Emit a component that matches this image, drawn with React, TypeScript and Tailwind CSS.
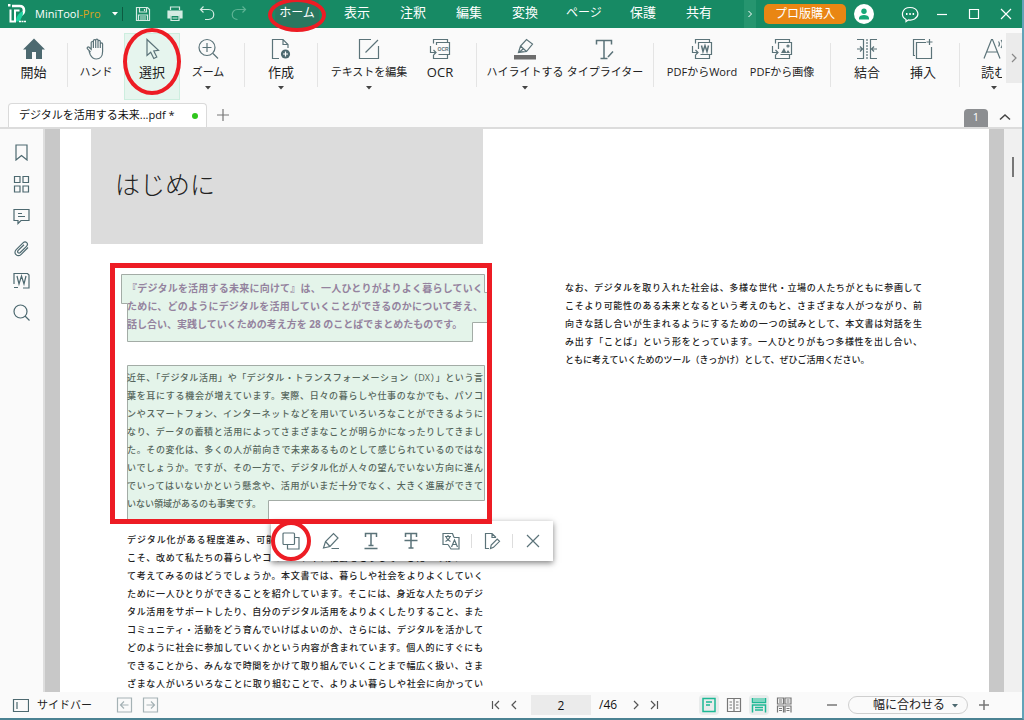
import { Fragment, type ReactNode } from "react";
import { clsx } from "clsx";

interface IconProps {
  size?: number;
  width?: number;
  className?: string;
  children: ReactNode;
}

function Icon({ size = 22, width = 1.2, className, children }: IconProps) {
  return (
    <svg
      width={size}
      height={size}
      viewBox={`0 0 ${size} ${size}`}
      fill="none"
      stroke="currentColor"
      strokeWidth={width}
      className={clsx("shrink-0", className)}
      aria-hidden="true"
    >
      {children}
    </svg>
  );
}

const icons = {
  home: (
    <Icon>
      <path d="M11 .5 0 11.5h3V21h6v-7h4v7h6v-9.500h3z" fill="#4d6970" stroke="none" />
    </Icon>
  ),
  hand: (
    <Icon>
      <path d="M5.500 14 2.500 10.800c-1-1.100.6-2.400 1.600-1.500l2.100 2V4.600c0-1.500 2.200-1.500 2.200 0V10M8.400 9V2.700c0-1.500 2.300-1.500 2.300 0V10M10.700 9V2.200c0-1.500 2.300-1.500 2.300 0V10M13 9V3.400c0-1.500 2.300-1.500 2.300 0V10M15.300 10V6c0-1.500 2.300-1.500 2.300 0v7.500c0 4.500-2.300 7.500-6.300 7.500-3 0-4.600-1.600-6-4.300L4 13" />
    </Icon>
  ),
  cursor: (
    <Icon>
      <path d="M6 1.500v16l3.700-3.300 3.100 6.300 3-1.500-3-6.100 4.700-.6z" />
    </Icon>
  ),
  zoom: (
    <Icon>
      <circle cx="10" cy="9.500" r="8" />
      <path d="M16 15.500l5 5M10 5v9M5.500 9.500h9" />
    </Icon>
  ),
  create: (
    <Icon>
      <path d="M9 20.500H2.500v-19H13l5 5V10M13 1.500v5h5" />
      <circle cx="15.500" cy="16" r="4.600" fill="#4d6970" stroke="none" />
      <path d="M15.500 13.500v5M13 16h5" stroke="#fff" />
    </Icon>
  ),
  edit: (
    <Icon>
      <path d="M13 1.500H1.500v19h19V8M7.500 14.500l12.500-12.500" />
    </Icon>
  ),
  ocr: (
    <Icon>
      <path d="M4.500 5.500v-4h14v3M4.500 17v3.500h14V17M1.500 8v6.500h5M4.500 12l2.500 2.500L4.500 17M7.500 7V4.500h13v12h-11" />
      <text x="8.500" y="12.500" fontSize="5" fontWeight="700" fontFamily="Liberation Sans" fill="#5b7379" stroke="none">
        OCR
      </text>
    </Icon>
  ),
  highlight: (
    <Icon>
      <path d="M4.500 14.500 6.500 8l6-6.500L18.500 6l-6 7.500zM6.500 8l6 5.500M4.500 14.500l5-1M9 11l-4 3.500" />
      <path d="M0 17h22v4.500H0z" fill="#6d6d6d" stroke="none" />
    </Icon>
  ),
  typewriter: (
    <Icon width={1.5}>
      <path d="M2.500 6.500v-4h15v4M10 2.500v18M6.500 20.500h7M14 19l5-5.500" />
    </Icon>
  ),
  toWord: (
    <Icon>
      <path d="M4.500 5.500v-4h14v3M4.500 17v3.500h14V17M1.500 8v6.500h5M4.500 12l2.500 2.500L4.500 17M7.500 11V4.500h13v12h-11" />
      <path d="M10.500 7.500l1.500 6 2-6 2 6 1.500-6" strokeWidth="1.500" />
    </Icon>
  ),
  toImage: (
    <Icon>
      <path d="M4.500 5.500v-4h14v3M4.500 17v3.500h14V17M1.500 8v6.500h5M4.500 12l2.500 2.500L4.500 17M7.500 11V4.500h13v12h-11" />
      <path d="M10 15l3-5 2.500 5zM15 15l2-3 2 3z" fill="#5b7379" stroke="none" />
      <circle cx="17" cy="8" r="1" />
    </Icon>
  ),
  merge: (
    <Icon>
      <path d="M1 1.500h6.500v19H1M21 1.500h-6.500v19H21M1 11h5M4 8.500 6.500 11 4 13.500M21 11h-5M18 8.500 15.500 11l2.500 2.500" />
      <path d="M11 1v20" strokeDasharray="2 1" />
    </Icon>
  ),
  insert: (
    <Icon>
      <path d="M13 1.500H1.500v16H3M14 4.500H4.500v16h15V9M17.500 1v6M14.500 4h6" />
    </Icon>
  ),
  read: (
    <Icon>
      <path d="M1 20.500 8.500 1.500h1l7.500 19M4 14h10M15.500 3.500c1.200 1.600 1.200 3.400 0 5M18 2c2 2.600 2 5.400 0 8" />
    </Icon>
  ),
};

function Caret({ className }: { className?: string }) {
  return (
    <svg width="6" height="4" viewBox="0 0 6 4" className={className} aria-hidden="true">
      <path d="M0 0h6L3 3.500z" fill="currentColor" />
    </svg>
  );
}

/* hand-drawn style marker rings */
function Ring({ className }: { className: string }) {
  return (
    <span
      className={clsx("pointer-events-none absolute z-20 rounded-[50%] border-4 border-[#ed1c24]", className)}
    />
  );
}

const menus = ["表示", "注釈", "編集", "変換", "ページ", "保護", "共有"];

function TitleBar() {
  return (
    <header className="flex h-7 shrink-0 items-center bg-[#178a64] text-[13px] text-white">
      <button className="flex h-7 w-[122px] items-center pl-2">
        <svg width="19" height="20" viewBox="0 0 19 20" fill="none" aria-hidden="true">
          <path d="M4 2h7.500c3 0 4.500 1.800 4.500 4.500 0 2-1 3.500-3 4.500" stroke="#fff" strokeWidth="2.600" />
          <path d="M2.500 5.500v12H7v-11h4.500" stroke="#fff" strokeWidth="2" />
          <path d="M8 17.500c0-5 2.500-8 6-10l1 1c0 4-2 5-3 9z" fill="#1fd3a0" />
          <path d="M0 0h2.500v2.500H0z" fill="#fff" />
          <path d="M11 17.500h7" stroke="#fff" strokeWidth="1.500" strokeDasharray="2 .5" />
        </svg>
        <span className="ml-2 font-['Open_Sans'] text-[11px]">
          MiniTool<span className="text-[#d9a520]">-Pro</span>
        </span>
        <Caret className="ml-auto mr-1" />
      </button>
      <span className="h-3.5 w-px bg-[#0c5c41]" />
      <div className="ml-1 mr-2.5 flex text-[#d5ebe3]">
        <button className="flex w-8 justify-center" aria-label="保存">
          <Icon size={16}>
            <path d="M1.500 1.500h11l2 2v11h-13zM4.500 1.500v4.500h7V1.500M3.500 14.500V9h9v5.500M5 11h6M5 13h6M9.500 3v2" />
          </Icon>
        </button>
        <button className="flex w-8 justify-center" aria-label="印刷">
          <Icon size={16}>
            <path d="M3.500 4V1h9v3" />
            <path d="M1 5h14v7h-2V9H3v3H1z" fill="currentColor" />
            <path d="M4 9.500h8v5H4zM5.500 12h5" />
          </Icon>
        </button>
        <button className="flex w-8 justify-center" aria-label="元に戻す">
          <Icon size={16}>
            <path d="M4.500.5 1.500 3.500l3 3M1.500 3.500h8c7 0 7 10 0 10H6" />
          </Icon>
        </button>
        <button className="flex w-8 justify-center text-[#5db394]" aria-label="やり直し">
          <Icon size={16}>
            <path d="M11.500.5l3 3-3 3M14.500 3.500h-8c-7 0-7 10 0 10" />
          </Icon>
        </button>
      </div>
      <nav className="flex">
        <button className="relative flex h-7 w-16 items-center justify-center">
          <span className="flex h-7 items-center bg-[#2a7760] px-1 pb-0.5 text-[12px]">ホーム</span>
          <Ring className="inset-x-[3px] -bottom-1 -top-0.5" />
        </button>
        {menus.map((m) => (
          <button key={m} className={clsx("h-7 pb-0.5", m === "ページ" ? "w-[62px] text-[12px]" : "w-14")}>
            {m}
          </button>
        ))}
      </nav>
      <div className="ml-auto flex items-center">
        <button className="flex h-7 w-3 items-center justify-center bg-[#26956f]" aria-label="次へ">
          <Icon size={8} width={1}>
            <path d="M2.500 1l3 3-3 3" />
          </Icon>
        </button>
        <button className="ml-2 h-5 w-[82px] rounded-[5px] bg-[#e98613] text-[12px] leading-5">プロ版購入</button>
        <button className="ml-2 flex h-5 w-5 items-center justify-center rounded-full bg-white" aria-label="アカウント">
          <svg width="12" height="12" viewBox="0 0 12 12" fill="#17a878" aria-hidden="true">
            <circle cx="6" cy="3.200" r="2.700" />
            <path d="M1 11.500V10c0-4 10-4 10 0v1.500z" />
          </svg>
        </button>
        <button className="ml-5 flex w-8 justify-center" aria-label="フィードバック">
          <Icon size={18}>
            <path d="M5 14.500C-1 11 1 2.500 9 2.500s10.500 8 4.500 11.500c-2 1-4.500 1.200-6 .8L5 16.500z" />
            <path d="M5 9h1.500M8.300 9h1.500M11.600 9h1.500" strokeWidth="1.800" />
          </Icon>
        </button>
        <button className="flex w-8 justify-center" aria-label="最小化">
          <Icon size={12}>
            <path d="M1 6.500h10" />
          </Icon>
        </button>
        <button className="flex w-8 justify-center" aria-label="最大化">
          <Icon size={12}>
            <path d="M1.500 1.500h9v9h-9z" />
          </Icon>
        </button>
        <button className="flex w-8 justify-center" aria-label="閉じる">
          <Icon size={12}>
            <path d="M1 1l10 10M11 1 1 11" />
          </Icon>
        </button>
      </div>
    </header>
  );
}

interface ToolProps {
  icon: ReactNode;
  label: string;
  className?: string;
  menu?: boolean;
  active?: boolean;
}

function Tool({ icon, label, className = "w-14", menu, active }: ToolProps) {
  const kana = /[ァ-ヶ]|から/.test(label);
  return (
    <button
      className={clsx(
        "relative flex h-[67px] shrink-0 flex-col items-center border pt-1",
        active ? "border-[#cdeedf] bg-[#e6f5ee]" : "border-transparent",
        className
      )}
    >
      {icon}
      <span className={clsx("mt-0.5 whitespace-nowrap leading-5 text-[#222]", kana ? "text-[11px]" : "text-[13px]")}>
        {label}
      </span>
      {menu && <Caret className="mt-1 text-[#444]" />}
      {active && <Ring className="-inset-x-0.5 -top-1.5 bottom-1" />}
    </button>
  );
}

function Divider() {
  return <span className="mt-2.5 h-11 w-px shrink-0 bg-[#e4e4e4]" />;
}

function Ribbon() {
  return (
    <div className="flex h-[76px] shrink-0 pt-[5px] text-[#5b7379]">
      <div className="flex min-w-0 flex-1 overflow-x-clip">
        <Tool icon={icons.home} label="開始" className="w-[67px]" />
        <Divider />
        <div className="flex pr-2">
          <Tool icon={icons.hand} label="ハンド" />
          <Tool icon={icons.cursor} label="選択" active />
          <Tool icon={icons.zoom} label="ズーム" menu />
        </div>
        <Divider />
        <div className="flex px-2">
          <Tool icon={icons.create} label="作成" menu />
        </div>
        <Divider />
        <div className="flex px-2">
          <Tool icon={icons.edit} label="テキストを編集" className="w-[86px]" menu />
          <Tool icon={icons.ocr} label="OCR" />
        </div>
        <Divider />
        <div className="flex px-2">
          <Tool icon={icons.highlight} label="ハイライトする" className="w-20" menu />
          <Tool icon={icons.typewriter} label="タイプライター" className="w-20" />
        </div>
        <Divider />
        <div className="flex px-2">
          <Tool icon={icons.toWord} label="PDFからWord" className="w-20" />
          <Tool icon={icons.toImage} label="PDFから画像" className="w-20" />
        </div>
        <Divider />
        <div className="flex px-2">
          <Tool icon={icons.merge} label="結合" />
          <Tool icon={icons.insert} label="挿入" />
        </div>
        <Divider />
        <div className="flex pl-2">
          <Tool icon={icons.read} label="読む" className="w-[52px]" menu />
        </div>
      </div>
      <button className="ml-1 flex h-[50px] w-4 items-center justify-center bg-[#ebebeb]" aria-label="続き">
        <Icon size={10} className="text-[#888]">
          <path d="M3 1l4 4-4 4" />
        </Icon>
      </button>
    </div>
  );
}

function TabBar() {
  return (
    <div className="flex h-[25px] shrink-0 items-end border-b-2 border-[#dcdcdc] pl-2">
      <div className="flex h-6 w-[199px] items-center rounded-t border border-b-0 border-[#dadada] bg-white pl-2.5 pr-2">
        <span className="whitespace-nowrap text-[11px] text-[#111]">デジタルを活用する未来...pdf *</span>
        <span className="ml-auto h-1.5 w-1.5 rounded-full bg-[#2fc61c]" />
      </div>
      <button className="flex h-6 w-8 items-center justify-center text-[#777]" aria-label="新しいタブ">
        <Icon size={12}>
          <path d="M0 6h12M6 0v12" />
        </Icon>
      </button>
      <span className="ml-auto h-[18px] w-6 rounded-t-sm bg-[#8c8e91] text-center text-[11px] leading-4 text-white">
        1
      </span>
      <button className="flex h-5 w-[34px] items-center justify-center text-[#444]" aria-label="折りたたむ">
        <Icon size={12} width={1.5}>
          <path d="M1 8.500l5-4.500 5 4.500" />
        </Icon>
      </button>
    </div>
  );
}

const sideItems = [
  { name: "しおり", d: "M3 1h11v15l-5.500-4.500L3 16z" },
  { name: "サムネイル", d: "M1.500 .5h5.500v6H1.500zM10 .5h5.500v6H10zM1.500 10h5.500v6H1.500zM10 10h5.500v6H10z" },
  { name: "コメント", d: "M1 1.500h15v11H8l-3 3v-3H1zM5 5.500h4M5 8.500h7" },
  {
    name: "添付",
    d: "M15 7.500 8.200 14.300c-3.600 3.500-8.500-1-5-4.600L10 2.900c2.700-2.500 6 .8 3.500 3.400L7.300 12.500c-1.700 1.500-3.600-.4-2.100-2.100L11 4.700",
  },
  { name: "Word", d: "M1 12V1.500h13.500L16 3v13h-6M1 15.500h4M4 4l2 8 2.500-8L11 12l2-8" },
  { name: "検索", d: "M7.500 1a6.500 6.500 0 1 0 0 13 6.500 6.500 0 0 0 0-13M12 12l4.500 4.500" },
];

function SideNav() {
  return (
    <nav className="w-[45px] shrink-0 border-r-2 border-[#dedede] pt-[7px] text-[#4d6970]">
      {sideItems.map((s) => (
        <button key={s.name} className="flex h-8 w-full items-center justify-center" aria-label={s.name}>
          <Icon size={17}>
            <path d={s.d} />
          </Icon>
        </button>
      ))}
    </nav>
  );
}

const lead = [
  "『デジタルを活用する未来に向けて』は、一人ひとりがよりよく暮らしていく",
  "ために、どのようにデジタルを活用していくことができるのかについて考え、",
  "話し合い、実践していくための考え方を 28 のことばでまとめたものです。",
];

const background = [
  "近年、「デジタル活用」や「デジタル・トランスフォーメーション（DX）」という言",
  "葉を耳にする機会が増えています。実際、日々の暮らしや仕事のなかでも、パソコ",
  "ンやスマートフォン、インターネットなどを用いていろいろなことができるように",
  "なり、データの蓄積と活用によってさまざまなことが明らかになったりしてきまし",
  "た。その変化は、多くの人が前向きで未来あるものとして感じられているのではな",
  "いでしょうか。ですが、その一方で、デジタル化が人々の望んでいない方向に進ん",
  "でいってはいないかという懸念や、活用がいまだ十分でなく、大きく進展ができて",
  "いない領域があるのも事実です。",
];

const purpose = [
  "デジタル化がある程度進み、可能性が広がり、課題も見えてきた今の時代だから",
  "こそ、改めて私たちの暮らしやコミュニティ、社会をどうしていきたいのかについ",
  "て考えてみるのはどうでしょうか。本文書では、暮らしや社会をよりよくしていく",
  "ために一人ひとりができることを紹介しています。そこには、身近な人たちのデジ",
  "タル活用をサポートしたり、自分のデジタル活用をよりよくしたりすること、また",
  "コミュニティ・活動をどう育んでいけばよいのか、さらには、デジタルを活かして",
  "どのように社会に参加していくかという内容が含まれています。個人的にすぐにも",
  "できることから、みんなで時間をかけて取り組んでいくことまで幅広く扱い、さま",
  "ざまな人がいろいろなことに取り組むことで、よりよい暮らしや社会に向かってい",
];

const closing = [
  "なお、デジタルを取り入れた社会は、多様な世代・立場の人たちがともに参画して",
  "こそより可能性のある未来となるという考えのもと、さまざまな人がつながり、前",
  "向きな話し合いが生まれるようにするための一つの試みとして、本文書は対話を生",
  "み出す「ことば」という形をとっています。一人ひとりがもつ多様性を出し合い、",
  "ともに考えていくためのツール（きっかけ）として、ぜひご活用ください。",
];

function Paragraph({ lines, className }: { lines: string[]; className?: string }) {
  return (
    <p className={clsx("text-justify leading-[18px]", className)}>
      {lines.map((line) => (
        <Fragment key={line}>
          <span className="whitespace-nowrap">{line}</span>
          <wbr />
        </Fragment>
      ))}
    </p>
  );
}

function SelectionToolbar() {
  const cell = "relative flex h-10 w-10 items-center justify-center";
  return (
    <div className="absolute left-[180px] top-[392px] z-10 flex items-center bg-white text-[#5b7379] shadow-[0_2px_6px_rgba(0,0,0,0.5)]">
      <button className={cell} aria-label="コピー">
        <Icon size={18}>
          <rect x="1" y="1" width="11.500" height="11.500" rx="1" />
          <path d="M12.500 5.500H17V17H5.500v-4.500" />
        </Icon>
        <Ring className="inset-0" />
      </button>
      <button className={cell} aria-label="ハイライト">
        <Icon size={18}>
          <path d="M1.500 16 3.500 9.500l8-8L16 6l-8 8.500zM3.500 9.500 8 14.500M9.500 16.500H17" />
        </Icon>
      </button>
      <button className={cell} aria-label="下線">
        <Icon size={18} width={1.500}>
          <path d="M3.500 5V1.500h11V5M9 1.500v12M6.500 13.500h5M2.500 16.500h13" />
        </Icon>
      </button>
      <button className={cell} aria-label="取り消し線">
        <Icon size={18} width={1.500}>
          <path d="M3.500 5V1.500h11V5M9 1.500v14.500M6.500 16h5M2.500 8.500h13" />
        </Icon>
      </button>
      <button className={cell} aria-label="翻訳">
        <Icon size={18}>
          <path d="M6 12.500H1v-11h9.500l1.500 4M12 5.500h5v11.500H9l-3-4.500M3 4.500h6M6 3v1.500M4 4.500c.5 2.500 2.500 4 4.500 5M8 4.500c-.5 2.500-2.500 4-4.500 5M9.500 15l3-7 3 7M10.500 12.500h4" />
        </Icon>
      </button>
      <span className="h-3.5 w-px bg-[#ddd]" />
      <button className={cell} aria-label="テキストを編集">
        <Icon size={18}>
          <path d="M6 16.500H2.500v-15H9l4 4M9 1.500v4h4M7.500 16.500l.7-3.500 6-6 2.300 2.300-6 6z" />
        </Icon>
      </button>
      <span className="h-3.5 w-px bg-[#ddd]" />
      <button className={cell} aria-label="閉じる">
        <Icon size={14}>
          <path d="M1 1l12 12M13 1 1 13" />
        </Icon>
      </button>
    </div>
  );
}

function DocumentView() {
  return (
    <main className="flex min-w-0 flex-1 items-stretch overflow-hidden">
      <div className="w-[15px] shrink-0 bg-[#c8c8c8]" />
      <article className="flex min-w-0 flex-1 bg-white pl-[31px] text-[9px] font-medium text-[#222]">
        <section className="relative w-[392px] shrink-0">
          <div className="flex h-[115px] items-center bg-[#dcdcdc] pb-1 pl-6">
            <h1 className="text-[25px] font-light text-[#222]">はじめに</h1>
          </div>
          <svg
            className="absolute left-[30px] top-[145px]"
            width="368"
            height="250"
            viewBox="0 0 368 250"
            fill="#e4f4ea"
            stroke="#a3aca6"
            aria-hidden="true"
          >
            <path d="M.5.500h363v18h4v30h-16v19h-345v-38h-6z" />
            <path d="M6.500 91.500h357v135h-216v22H6.500z" />
          </svg>
          <div className="relative pl-9 pt-[35px]">
            <Paragraph lines={lead} className="mb-9 text-[10px] font-bold text-[#94839e]" />
            <Paragraph lines={background} className="mb-[18px] text-[#56665c]" />
            {/* runs on to the next page, so its last line is set full width too */}
            <Paragraph lines={purpose} className="[text-align-last:justify]" />
          </div>
          <SelectionToolbar />
          <span className="pointer-events-none absolute left-[19px] top-[134px] z-10 h-[261px] w-[382px] border-[5px] border-[#ed1c24]" />
        </section>
        <section className="ml-[82px] w-[357px] shrink-0 pt-[150px]">
          <Paragraph lines={closing} />
        </section>
      </article>
      <div className="w-[15px] shrink-0 bg-[#c8c8c8]" />
      <div className="flex w-[18px] shrink-0 justify-center bg-[#f0f0f0] pt-7">
        <span className="h-5 w-0.5 bg-[#777]" />
      </div>
    </main>
  );
}

function StatusBar() {
  const view = "flex h-5 w-5 items-center justify-center rounded";
  return (
    <footer className="flex h-[26px] shrink-0 items-center text-[12px] text-[#222]">
      <div className="flex flex-1 items-center pl-3">
        <button className="flex items-center gap-2 text-[11px]">
          <Icon size={17} className="text-[#4d6970]">
            <path d="M1.500 2.500h15v12h-15zM5 5v7" />
          </Icon>
          サイドバー
        </button>
        <div className="ml-6 flex gap-2 text-[#a5b2b5]">
          <button aria-label="戻る">
            <Icon size={18}>
              <path d="M1.500 2h14v14h-14zM12.500 9h-8M8 5.500 4.500 9 8 12.500" />
            </Icon>
          </button>
          <button aria-label="進む">
            <Icon size={18}>
              <path d="M1.500 2h14v14h-14zM4.500 9h8M9 5.500 12.500 9 9 12.500" />
            </Icon>
          </button>
        </div>
      </div>
      <div className="flex items-center text-[#555]">
        <button className="flex w-[18px] justify-center" aria-label="最初のページ">
          <Icon size={10}>
            <path d="M1.500 1v8M8 1 4 5l4 4" />
          </Icon>
        </button>
        <button className="flex w-[18px] justify-center" aria-label="前のページ">
          <Icon size={10}>
            <path d="M7 1 3 5l4 4" />
          </Icon>
        </button>
        <label className="ml-2 flex items-center gap-2 text-[#111]">
          <input
            aria-label="ページ番号"
            defaultValue="2"
            className="h-5 w-[60px] bg-[#ebebeb] text-center outline-none"
          />
          <span className="w-5">/46</span>
        </label>
        <button className="ml-2 flex w-[18px] justify-center" aria-label="次のページ">
          <Icon size={10}>
            <path d="M3 1l4 4-4 4" />
          </Icon>
        </button>
        <button className="flex w-[18px] justify-center" aria-label="最後のページ">
          <Icon size={10}>
            <path d="M8.500 1v8M2 1l4 4-4 4" />
          </Icon>
        </button>
      </div>
      <div className="ml-9 flex items-center gap-[5px] text-[#777]">
        <button className={clsx(view, "bg-[#e9ecec] text-[#1db894]")} aria-label="単一ページ">
          <Icon size={16} width={1.500}>
            <path d="M2 1.500h12v13H2zM5 5h6M5 8h4" />
          </Icon>
        </button>
        <button className={view} aria-label="見開き">
          <Icon size={16}>
            <path d="M1.500 1.500h13v13h-13zM8 1.500v13M3.500 5h2.500M3.500 8h2.500M3.500 11h2.500M10 5h2.500M10 8h2.500M10 11h2.500" />
          </Icon>
        </button>
        <button className={clsx(view, "bg-[#e9ecec] text-[#1db894]")} aria-label="連続">
          <Icon size={16} width={1.500}>
            <path d="M1.500 1v4.500h13V1M1.500 15.500V8h13v7.500M4 10.500h8M4 13h8" />
            <path d="M2 1h12v4H2z" fill="#7fd6c1" stroke="none" />
          </Icon>
        </button>
        <button className={view} aria-label="見開き連続">
          <Icon size={16}>
            <path d="M1.500 1v6h6V1zM9 1v6h6V1zM1.500 15.500V9h6v6.500M9 15.500V9h6v6.500M3 3h3M3 5h3M10.500 3h3M10.500 5h3M3 11.500h3M3 13.500h3M10.500 11.500h3M10.500 13.500h3" />
          </Icon>
        </button>
      </div>
      <div className="ml-7 mr-7 flex items-center text-[#777]">
        <button className="flex w-5 justify-center" aria-label="縮小">
          <Icon size={10} width={1.500}>
            <path d="M0 5h10" />
          </Icon>
        </button>
        <div className="relative ml-1.5">
          <select
            aria-label="表示倍率"
            className="h-[18px] w-[120px] appearance-none rounded-full border border-[#cfcfcf] bg-transparent pl-6 text-[12px] leading-4 text-[#222]"
          >
            <option>幅に合わせる</option>
          </select>
          <Caret className="pointer-events-none absolute right-2.5 top-2 text-[#4d6970]" />
        </div>
        <button className="ml-1.5 flex w-5 justify-center" aria-label="拡大">
          <Icon size={10} width={1.500}>
            <path d="M0 5h10M5 0v10" />
          </Icon>
        </button>
      </div>
    </footer>
  );
}

export default function App() {
  return (
    <div className="flex h-screen flex-col overflow-hidden border-b-2 border-r-2 border-b-[#4b8292] border-r-[#62a3b8] bg-[#fafafa] font-['Open_Sans','Noto_Sans_CJK_JP',sans-serif]">
      <TitleBar />
      <Ribbon />
      <TabBar />
      <div className="flex min-h-0 flex-1">
        <SideNav />
        <DocumentView />
      </div>
      <StatusBar />
    </div>
  );
}
